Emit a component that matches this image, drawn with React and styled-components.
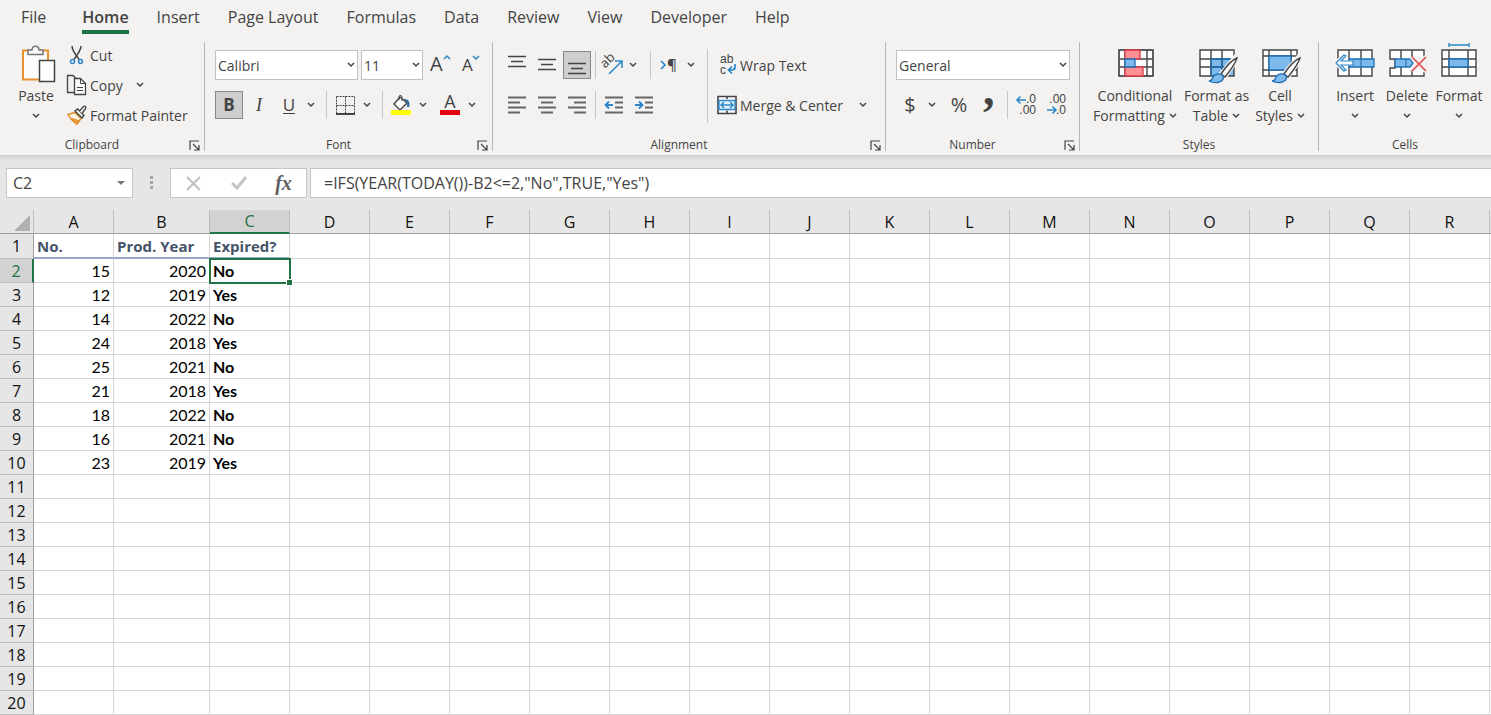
import React from "react";
import styled, { createGlobalStyle, css } from "styled-components";

const UI = `"Open Sans", "Noto Sans", sans-serif`;
const INK = "#444444";
const BLUE = "#2b88c8";
const GREEN = "#217346";

const Global = createGlobalStyle`
  *, *::before, *::after { box-sizing: border-box; }
  html, body { margin: 0; background: #ffffff; }
  body { font-family: ${UI}; font-size: 14px; color: ${INK}; overflow: hidden; }
  button, input, select { font: inherit; color: inherit; }
  svg { display: block; flex: none; overflow: visible; }
`;

const Page = styled.div`
  min-height: 100vh;
  display: flex;
  flex-direction: column;
`;

/* Tabs */
const TabBar = styled.nav`
  display: flex;
  height: 40px;
  padding: 0 7px;
  background: #f3f2f1;
`;

const Tab = styled.button`
  display: flex;
  flex-direction: column;
  height: 34px;
  margin-right: ${(p) => p.$after || 0}px;
  padding: 5px 14px 0;
  border: 0;
  background: none;
  font-size: 16px;
  line-height: 25px;
  white-space: nowrap;
  font-weight: ${(p) => (p.$active ? 600 : 400)};

  &::after {
    content: "";
    width: 100%;
    height: 4px;
    background: ${(p) => (p.$active ? GREEN : "transparent")};
  }
`;

/* Ribbon */
const Ribbon = styled.div`
  display: flex;
  padding: 2px 0 4px;
  background: #f3f2f1;
`;

const Group = styled.section`
  display: flex;
  flex-direction: column;
  flex: 0 0 ${(p) => p.$w}px;
  height: 109px;
  border-right: 1px solid #b8b6b4;
  &:last-child { border-right: 0; }
`;

const GroupBody = styled.div`
  display: flex;
  flex: 1;
  padding-left: ${(p) => p.$pad}px;
  gap: ${(p) => p.$gap || 0}px;
`;

const GroupFooter = styled.div`
  display: flex;
  align-items: center;
  height: 12px;
  font-size: 12px;
  line-height: 12px;
`;

const GroupName = styled.span`
  flex: 1;
  text-align: center;
`;

const Launcher = styled.button`
  display: grid;
  place-items: center;
  width: 20px;
  height: 12px;
  padding: 0;
  border: 0;
  background: none;
`;

const Rows = styled.div`
  display: flex;
  flex-direction: column;
  gap: 10px;
  padding-top: 8px;
`;

const Row = styled.div`
  display: flex;
  align-items: center;
  height: 30px;
  gap: ${(p) => (p.$gap === undefined ? 2 : p.$gap)}px;
`;

const TightRows = styled(Rows)`
  gap: 0;
  padding-top: 0;
  margin-top: -2px;
`;

const IconButton = styled.button`
  display: grid;
  place-items: center;
  width: ${(p) => p.$w || 28}px;
  height: 28px;
  padding: 0;
  border: 1px solid ${(p) => (p.$on ? "#8a8886" : "transparent")};
  background: ${(p) => (p.$on ? "#d0cecc" : "none")};
`;

const Arrow = styled.button`
  display: grid;
  place-items: center;
  width: 16px;
  height: 28px;
  padding: 0;
  border: 0;
  background: none;
`;

const SplitButton = styled.div`
  display: flex;
`;

const TextButton = styled.button`
  display: flex;
  align-items: center;
  gap: 3px;
  height: 28px;
  padding: 0;
  border: 0;
  background: none;
  white-space: nowrap;
`;

const BigButton = styled.button`
  display: flex;
  flex-direction: column;
  align-items: center;
  width: ${(p) => p.$w}px;
  height: 84px;
  padding: 0;
  border: 0;
  background: none;
  line-height: 20px;
  white-space: nowrap;
`;

const BigIcon = styled.span`
  display: grid;
  place-items: center;
  height: 44px;
  flex: none;
`;

const BigLine = styled.span`
  display: flex;
  align-items: center;
  justify-content: center;
  gap: 4px;
  height: 20px;
`;

const Divider = styled.span`
  width: 1px;
  height: 28px;
  margin: 0 2px 0 ${(p) => p.$before || 5}px;
  background: #c8c6c4;
`;

const TallDivider = styled.span`
  width: 1px;
  height: 74px;
  margin: 7px 1px 0 0;
  background: #c8c6c4;
`;

const SelectBox = styled.label`
  position: relative;
  display: flex;
  width: ${(p) => p.$w}px;
  margin-right: 1px;

  select {
    width: 100%;
    height: 30px;
    padding: 0 18px 0 2px;
    border: 1px solid #c3c1bf;
    border-radius: 0;
    background: #ffffff;
    appearance: none;
  }
  svg {
    position: absolute;
    right: 3px;
    top: 12px;
    pointer-events: none;
  }
`;

const Glyph = styled.span`
  font-size: ${(p) => p.$size}px;
  line-height: 24px;
  ${(p) => p.$bold && css`font-weight: 700;`}
  ${(p) => p.$italic && css`font-family: "Liberation Serif", serif; font-style: italic;`}
  ${(p) => p.$under && css`border-bottom: 1px solid ${INK}; line-height: 17px;`}
`;

/* Formula bar */
const FormulaBar = styled.div`
  display: flex;
  align-items: flex-start;
  height: 55px;
  padding: 13px 0 0 6px;
  background: linear-gradient(#cfcecd, #e6e6e6 6px);
`;

const Field = styled.div`
  display: flex;
  align-items: center;
  height: 30px;
  border: 1px solid #c6c6c6;
  background: #ffffff;
  width: ${(p) => p.$w};
  ${(p) => p.$grow && css`flex: 1; border-right: 0;`}

  input {
    flex: 1;
    min-width: 0;
    height: 28px;
    padding: 0 0 0 ${(p) => p.$pad}px;
    border: 0;
    outline: 0;
    background: none;
    font-size: 16px;
  }
`;

const FormulaActions = styled(Field)`
  justify-content: space-around;
  margin-right: 3px;
  color: #606060;
`;

const Grip = styled.span`
  display: grid;
  place-items: center;
  width: 37px;
  height: 30px;
`;

/* Sheet */
const SheetArea = styled.main`
  flex: 1;
  overflow: hidden;
`;

const Sheet = styled.table`
  width: 100%;
  table-layout: fixed;
  border-collapse: separate;
  border-spacing: 0;
  color: #000000;

  th:last-child, td:last-child {
    padding: 0;
    border-right: 0;
  }
`;

const Col = styled.col`
  width: ${(p) => (p.$w ? `${p.$w}px` : "auto")};
`;

const headCell = css`
  padding: 0;
  background: ${(p) => (p.$on ? "#d2d2d2" : "#e6e6e6")};
  color: ${(p) => (p.$on ? GREEN : "#111111")};
  font-size: 16px;
  font-weight: 400;
  line-height: 22px;
  text-align: center;
`;

const ColumnHead = styled.th`
  ${headCell}
  height: 24px;
  border-right: 1px solid #bdbdbd;
  border-bottom: ${(p) => (p.$on ? `2px solid ${GREEN}` : "1px solid #9f9f9f")};
  overflow: hidden;
`;

const Corner = styled(ColumnHead)`
  svg { margin: 2px 3px 0 auto; }
`;

const RowHead = styled.th`
  ${headCell}
  border-right: ${(p) => (p.$on ? `2px solid ${GREEN}` : "1px solid #9f9f9f")};
  border-bottom: 1px solid #bdbdbd;
`;

const Cell = styled.td`
  position: relative;
  height: ${(p) => (p.$title ? 25 : 24)}px;
  padding: 0 3px;
  border-right: 1px solid #d4d4d4;
  border-bottom: ${(p) => (p.$rule ? "2px solid #93a7cd" : "1px solid #d4d4d4")};
  font-family: ${(p) => (p.$title ? UI : `Lato, ${UI}`)};
  font-size: ${(p) => (p.$title ? 15 : 16)}px;
  line-height: 22px;
  font-weight: ${(p) => (p.$title || p.$strong ? 700 : 400)};
  color: ${(p) => (p.$title ? "#44546a" : "#000000")};
  text-align: ${(p) => (p.$number ? "right" : "left")};
  white-space: nowrap;
`;

const Selection = styled.span`
  position: absolute;
  inset: -1px -2px -2px -1px;
  z-index: 1;
  border: 2px solid ${GREEN};

  &::after {
    content: "";
    position: absolute;
    right: -4px;
    bottom: -4px;
    width: 7px;
    height: 7px;
    border: 1px solid #ffffff;
    background: ${GREEN};
  }
`;

/* Icons */
const Icon = ({ w, h, children }) => (
  <svg width={w} height={h} viewBox={`0 0 ${w} ${h}`} fill="none" stroke={INK} aria-hidden="true">
    {children}
  </svg>
);

const IconText = styled.text`
  font-family: ${UI};
  font-size: ${(p) => p.$size}px;
  font-weight: ${(p) => p.$weight || 400};
  fill: ${INK};
  stroke: none;
`;

const SerifIconText = styled(IconText)`
  font-family: "Liberation Serif", serif;
`;

const StackedIconText = styled(IconText)`
  font-family: "Liberation Sans", sans-serif;
`;

const Chevron = () => (
  <Icon w={8} h={6}><path d="M1 1l3 3 3-3" strokeWidth="1.5" /></Icon>
);

const LauncherIcon = () => (
  <Icon w={11} h={11}>
    <path d="M1 10V1h9M4 4l6 6M10 5v5H5" strokeWidth="1.2" />
  </Icon>
);

const PasteIcon = () => (
  <Icon w={40} h={38}>
    <path d="M7 5.500h25v29H7z" fill="#fbfbfb" stroke="#e8912d" strokeWidth="2" />
    <path d="M12 9.500V5h4c0-5 7-5 7 0h4v4.500z" fill="#f8f8f8" stroke="#777" strokeWidth="1.5" />
    <path d="M23.500 15.500h15v21h-15z" fill="#ffffff" strokeWidth="1.5" />
  </Icon>
);

const CutIcon = () => (
  <Icon w={20} h={20}>
    <path d="M5 1c0 4 2 7 7.500 14M14 1c0 4-2 7-7.500 14" strokeWidth="1.5" />
    <circle cx="5.500" cy="16.500" r="2" stroke={BLUE} strokeWidth="1.5" />
    <circle cx="13.500" cy="16.500" r="2" stroke={BLUE} strokeWidth="1.5" />
  </Icon>
);

const CopyIcon = () => (
  <Icon w={20} h={20}>
    <path d="M7.500 17.500H.5V.5h5.500l3 3" strokeWidth="1.3" />
    <path d="M7.500 3.500h6l5 5v11h-11z" fill="#fbfbfb" strokeWidth="1.3" />
    <path d="M13.500 3.500v5h5M10 12.500h6M10 15.500h6" />
  </Icon>
);

const PainterIcon = () => (
  <Icon w={20} h={20}>
    <path d="M1 9.500l7-2 6 6-4 5.500C6 17 3 13 1 9.500z" fill="#fdf3e4" stroke="#e08a24" strokeWidth="1.4" />
    <path d="M4.500 13.500l7 2-1.500 3.500c-2-1-4-3-5.500-5.500z" fill="#f0a03c" stroke="#e08a24" />
    <path d="M8 6l2.500-2 6.500 6.500-2 2.500z" fill="#fbfbfb" strokeWidth="1.4" />
    <path d="M12.500 6l4-4.500c1.500-1 3 .5 2 2L15 8.500" fill="#fbfbfb" strokeWidth="1.4" />
  </Icon>
);

const SizeIcon = ({ up }) => (
  <Icon w={20} h={20}>
    <IconText x={up ? 0 : 2} y="16" $size={up ? 20 : 17}>A</IconText>
    <path d={up ? "M14 4l3-3 3 3" : "M13 1l3 3 3-3"} stroke={BLUE} strokeWidth="1.5" />
  </Icon>
);

const BordersIcon = () => (
  <Icon w={19} h={19}>
    <path d="M.5.5h18M.5 9.500h18M.5.5v17M9.500.5v17M18.500.5v17" strokeDasharray="2 1" />
    <path d="M0 18h19" strokeWidth="2" />
  </Icon>
);

const FillIcon = () => (
  <Icon w={20} h={20}>
    <path d="M9 2l7 6-7 7-6-6z" fill="#fbfbfb" strokeWidth="1.4" />
    <path d="M8 5V1.500C8 0 11 0 11 2v4" />
    <path d="M13 5c4 0 5 2 4 7" stroke="#2b6ca3" strokeWidth="2.200" />
    <path d="M0 17.500h20" stroke="#ffff00" strokeWidth="5" />
  </Icon>
);

const FontColorIcon = () => (
  <Icon w={20} h={20}>
    <IconText x="10" y="13" textAnchor="middle" $size={18}>A</IconText>
    <path d="M0 17.500h20" stroke="#e3000f" strokeWidth="5" />
  </Icon>
);

const LinesIcon = ({ lines, heavy, dy = 0 }) => (
  <Icon w={18} h={18}>
    {lines.map(([x, w], i) => (
      <path
        key={i}
        d={`M${x} ${1.5 + dy + i * 5}h${w}`}
        stroke={heavy ? "#666666" : INK}
        strokeWidth={heavy ? 2 : 1.5}
      />
    ))}
  </Icon>
);

const FULL = [0, 18];

const OrientationIcon = () => (
  <Icon w={22} h={22}>
    <IconText transform="rotate(-45 5 14)" x="3" y="13" $size={13}>ab</IconText>
    <path d="M7 20L19 8M13 7h7v7" stroke={BLUE} strokeWidth="1.5" />
  </Icon>
);

const DirectionIcon = () => (
  <Icon w={18} h={18}>
    <path d="M1 5l4 4-4 4" stroke={BLUE} strokeWidth="1.7" />
    <IconText x="7" y="14" $size={15} $weight={600}>¶</IconText>
  </Icon>
);

const IndentIcon = ({ out }) => (
  <Icon w={18} h={18}>
    <path d="M0 1.500h18M10 6.500h8M10 11.500h8M0 16.500h18" stroke="#666" strokeWidth="2" />
    <path d={out ? "M8 9H1M4 5.500L.5 9 4 12.500" : "M0 9h7M4 5.500L7.500 9 4 12.500"} stroke={BLUE} strokeWidth="1.8" />
  </Icon>
);

const WrapIcon = () => (
  <Icon w={20} h={20}>
    <StackedIconText x="3" y="8" $size={12}>ab</StackedIconText>
    <StackedIconText x="3" y="19" $size={12}>c</StackedIconText>
    <path d="M18 9v3c0 2-1 3-3 3h-3M15 11.500L11.500 15l3.500 3.500" stroke={BLUE} strokeWidth="1.7" />
  </Icon>
);

const MergeIcon = () => (
  <Icon w={20} h={20}>
    <path d="M1 1.500h18v17H1zM10 1v3M10 15.500V19" fill="#fbfbfb" strokeWidth="1.6" />
    <path d="M2 5.500h16v9H2z" fill="#e4f1fb" stroke={BLUE} strokeWidth="1.3" />
    <path d="M4 10h12M7 7l-3 3 3 3M13 7l3 3-3 3" stroke={BLUE} strokeWidth="1.5" />
  </Icon>
);

const CommaIcon = () => (
  <Icon w={12} h={18}>
    <SerifIconText x="0" y="9" $size={46} $weight={700}>,</SerifIconText>
  </Icon>
);

const DecimalIcon = ({ more }) => (
  <Icon w={20} h={20}>
    <StackedIconText x="20" y="8" textAnchor="end" $size={12}>{more ? ".0" : ".00"}</StackedIconText>
    <StackedIconText x="20" y="19" textAnchor="end" $size={12}>{more ? ".00" : ".0"}</StackedIconText>
    <path
      d={more ? "M10 5H1M4.500 1.500L1 5l3.500 3.500" : "M1 15h9M6.500 11.500L10 15l-3.500 3.500"}
      stroke={BLUE}
      strokeWidth="1.6"
    />
  </Icon>
);

const Brush = () => (
  <g>
    <path d="M36 8L20 27l4 4L38 11z" fill="#fbfbfb" stroke="#f3f2f1" strokeWidth="4" />
    <path d="M38 9c-5 2-12 10-16 16l4 3c5-6 10-13 12-19z" fill="#fbfbfb" strokeWidth="1.4" />
    <path d="M10 32c3 0 3-2 4-4 2-4 8-4 10-1 2 5-6 9-14 5z" fill="#7db9ea" stroke="#1e6fb5" strokeWidth="1.3" />
  </g>
);

const ConditionalIcon = () => (
  <Icon w={36} h={30}>
    <g transform="translate(1 0)">
      <path d="M1 1h34v26H1z" fill="#ffffff" />
      <path d="M1 1h34v26H1zM1 10h34M1 18h34M7 1v26M29 1v26" strokeWidth="1.4" />
      <path d="M7 1h15v9H7zM7 18h18v9H7z" fill="#ff8f94" stroke="#d83b44" strokeWidth="1.3" />
      <path d="M7 10h10v8H7z" fill="#7db9ea" stroke="#1e6fb5" strokeWidth="1.3" />
      <path d="M18 11h10v6H18z" fill="#ffffff" stroke="none" />
    </g>
  </Icon>
);

const FormatTableIcon = () => (
  <Icon w={36} h={30}>
    <path d="M1 1h34v26H1z" fill="#ffffff" stroke="none" />
    <path d="M12 10h23v17H12z" fill="#7db9ea" stroke="none" />
    <path d="M1 1h34v26H1zM1 10h34M1 18h34M12 1v26M23 1v26" strokeWidth="1.4" />
    <path d="M12 27V10h23M12 18h23M23 10v17" stroke="#1e6fb5" strokeWidth="1.3" />
    <Brush />
  </Icon>
);

const CellStylesIcon = () => (
  <Icon w={36} h={30}>
    <path d="M1 1h34v26H1z" fill="#ffffff" stroke="none" />
    <path d="M1 1h34v26H1zM1 7h34M7 1v26M1 21h34M29 1v26" strokeWidth="1.4" />
    <path d="M7 7h22v14H7z" fill="#7db9ea" stroke="#1e6fb5" strokeWidth="1.3" />
    <Brush />
  </Icon>
);

const InsertIcon = () => (
  <Icon w={40} h={30}>
    <path d="M3 1h34v26H3zM14 1v26M26 1v26" fill="#ffffff" strokeWidth="1.4" />
    <path d="M14 10h25v8H14z" fill="#7db9ea" stroke="#1e6fb5" strokeWidth="1.3" />
    <path d="M26 10v8" stroke="#1e6fb5" />
    <path d="M17 14H2M10 6l-8.500 8 8.500 8" stroke="#f3f2f1" strokeWidth="5" />
    <path d="M18 12H6l5-5-2-1-8 8 8 8 2-1-5-5h12z" fill="#ffffff" stroke={BLUE} strokeWidth="1.2" />
  </Icon>
);

const DeleteIcon = () => (
  <Icon w={36} h={30}>
    <path d="M1 1h34v26H1v-8h5v-9H1zM12 1v26M23 1v26" fill="#ffffff" strokeWidth="1.4" />
    <path d="M22 8h16v12H22z" fill="#f3f2f1" stroke="none" />
    <path d="M6 10h15l3 4-3 4H6z" fill="#7db9ea" stroke="#1e6fb5" strokeWidth="1.3" />
    <path d="M17 10v8" stroke="#1e6fb5" />
    <path d="M23 8l14 14M37 8L23 22" stroke="#f3f2f1" strokeWidth="5" />
    <path d="M23 8l14 14M37 8L23 22" stroke="#e04f55" strokeWidth="1.7" />
  </Icon>
);

const FormatIcon = () => (
  <Icon w={36} h={42}>
    <path d="M8 2h20M8 0v4M28 0v4" stroke={BLUE} strokeWidth="1.4" />
    <path d="M1 7h34v26H1zM1 16h34M1 24h34M8 7v26M27 7v26" fill="#ffffff" strokeWidth="1.4" />
    <path d="M8 16h19v8H8z" fill="#7db9ea" stroke="#1e6fb5" strokeWidth="1.3" />
  </Icon>
);

/* Composite controls */
const Split = ({ label, w, children }) => (
  <SplitButton>
    <IconButton $w={w} aria-label={label}>{children}</IconButton>
    <Arrow aria-label={`${label} options`}><Chevron /></Arrow>
  </SplitButton>
);

const Dropdown = ({ label, value, w }) => (
  <SelectBox $w={w}>
    <select aria-label={label} defaultValue={value}>
      <option>{value}</option>
    </select>
    <Chevron />
  </SelectBox>
);

const Big = ({ icon, w, first, second }) => (
  <BigButton $w={w}>
    <BigIcon>{icon}</BigIcon>
    <BigLine>{first}</BigLine>
    <BigLine>{second}<Chevron /></BigLine>
  </BigButton>
);

const RibbonGroup = ({ name, w, pad, gap, launcher = true, children }) => (
  <Group $w={w} aria-label={name}>
    <GroupBody $pad={pad} $gap={gap}>{children}</GroupBody>
    <GroupFooter>
      <GroupName>{name}</GroupName>
      {launcher && <Launcher aria-label={`${name} settings`}><LauncherIcon /></Launcher>}
    </GroupFooter>
  </Group>
);

const TABS = ["File", "Home", "Insert", "Page Layout", "Formulas", "Data", "Review", "View", "Developer", "Help"];
const COLUMNS = "ABCDEFGHIJKLMNOPQR".split("");
const TITLES = ["No.", "Prod. Year", "Expired?"];
const DATA = [
  [15, 2020, "No"],
  [12, 2019, "Yes"],
  [14, 2022, "No"],
  [24, 2018, "Yes"],
  [25, 2021, "No"],
  [21, 2018, "Yes"],
  [18, 2022, "No"],
  [16, 2021, "No"],
  [23, 2019, "Yes"],
];
const ROW_COUNT = 20;

export default function App() {
  return (
    <Page>
      <Global />
      <TabBar>
        {TABS.map((t) => (
          <Tab key={t} $active={t === "Home"} $after={t === "File" ? 8 : 0}>{t}</Tab>
        ))}
      </TabBar>

      <Ribbon>
        <RibbonGroup name="Clipboard" w={205} pad={10} gap={5}>
          <Big icon={<PasteIcon />} w={52} first="Paste" />
          <TightRows>
            <Row><TextButton><CutIcon />Cut</TextButton></Row>
            <Row $gap={9}>
              <TextButton><CopyIcon />Copy</TextButton>
              <Arrow aria-label="Copy options"><Chevron /></Arrow>
            </Row>
            <Row><TextButton><PainterIcon />Format Painter</TextButton></Row>
          </TightRows>
        </RibbonGroup>

        <RibbonGroup name="Font" w={288} pad={10}>
          <Rows>
            <Row>
              <Dropdown label="Font" value="Calibri" w={143} />
              <Dropdown label="Font size" value="11" w={62} />
              <IconButton aria-label="Increase font size"><SizeIcon up /></IconButton>
              <IconButton aria-label="Decrease font size"><SizeIcon /></IconButton>
            </Row>
            <Row>
              <IconButton $on aria-label="Bold"><Glyph $size={17} $bold>B</Glyph></IconButton>
              <IconButton aria-label="Italic"><Glyph $size={18} $italic>I</Glyph></IconButton>
              <Split label="Underline"><Glyph $size={17} $under>U</Glyph></Split>
              <Divider />
              <Split label="Borders"><BordersIcon /></Split>
              <Divider />
              <Row $gap={5}>
                <Split label="Fill color"><FillIcon /></Split>
                <Split label="Font color"><FontColorIcon /></Split>
              </Row>
            </Row>
          </Rows>
        </RibbonGroup>

        <RibbonGroup name="Alignment" w={393} pad={10} gap={8}>
          <Rows>
            <Row>
              <IconButton aria-label="Top align"><LinesIcon lines={[FULL, [3, 12], FULL]} dy={-1} /></IconButton>
              <IconButton aria-label="Middle align"><LinesIcon lines={[FULL, [3, 12], FULL]} dy={2} /></IconButton>
              <IconButton $on aria-label="Bottom align"><LinesIcon lines={[FULL, [3, 12], FULL]} dy={6} /></IconButton>
              <Divider $before={2} />
              <Split label="Orientation" w={25}><OrientationIcon /></Split>
              <Divider $before={7} />
              <Split label="Text direction"><DirectionIcon /></Split>
            </Row>
            <Row>
              <IconButton aria-label="Align left"><LinesIcon heavy lines={[FULL, [0, 12], FULL, [0, 12]]} /></IconButton>
              <IconButton aria-label="Center"><LinesIcon heavy lines={[FULL, [3, 12], FULL, [3, 12]]} /></IconButton>
              <IconButton aria-label="Align right"><LinesIcon heavy lines={[FULL, [6, 12], FULL, [6, 12]]} /></IconButton>
              <Divider $before={2} />
              <IconButton aria-label="Decrease indent"><IndentIcon out /></IconButton>
              <IconButton aria-label="Increase indent"><IndentIcon /></IconButton>
            </Row>
          </Rows>
          <TallDivider />
          <Rows>
            <Row><TextButton><WrapIcon />Wrap Text</TextButton></Row>
            <Row $gap={12}>
              <TextButton><MergeIcon />Merge &amp; Center</TextButton>
              <Arrow aria-label="Merge options"><Chevron /></Arrow>
            </Row>
          </Rows>
        </RibbonGroup>

        <RibbonGroup name="Number" w={194} pad={10}>
          <Rows>
            <Row><Dropdown label="Number format" value="General" w={174} /></Row>
            <Row>
              <Row $gap={5}>
                <Split label="Currency"><Glyph $size={20}>$</Glyph></Split>
                <IconButton aria-label="Percent"><Glyph $size={20}>%</Glyph></IconButton>
              </Row>
              <IconButton aria-label="Comma style"><CommaIcon /></IconButton>
              <Divider $before={2} />
              <IconButton aria-label="Increase decimal"><DecimalIcon more /></IconButton>
              <IconButton aria-label="Decrease decimal"><DecimalIcon /></IconButton>
            </Row>
          </Rows>
        </RibbonGroup>

        <RibbonGroup name="Styles" w={239} pad={10} gap={2} launcher={false}>
          <Big icon={<ConditionalIcon />} w={90} first="Conditional" second="Formatting" />
          <Big icon={<FormatTableIcon />} w={69} first="Format as" second="Table" />
          <Big icon={<CellStylesIcon />} w={54} first="Cell" second="Styles" />
        </RibbonGroup>

        <RibbonGroup name="Cells" w={172} pad={11} gap={2} launcher={false}>
          <Big icon={<InsertIcon />} w={50} first="Insert" />
          <Big icon={<DeleteIcon />} w={50} first="Delete" />
          <Big icon={<FormatIcon />} w={50} first="Format" />
        </RibbonGroup>
      </Ribbon>

      <FormulaBar>
        <Field $w="127px" $pad={6}>
          <input aria-label="Name box" defaultValue="C2" />
          <Icon w={17} h={6}><path d="M2 1h8L6 5z" fill="#777" stroke="none" /></Icon>
        </Field>
        <Grip>
          <Icon w={3} h={14}>
            <path d="M1.500 0v14" stroke="#a6a6a6" strokeWidth="3" strokeDasharray="3 2" />
          </Icon>
        </Grip>
        <FormulaActions $w="137px">
          <IconButton aria-label="Cancel">
            <Icon w={15} h={15}><path d="M1 1l13 13M14 1L1 14" stroke="#c0c0c0" strokeWidth="2" /></Icon>
          </IconButton>
          <IconButton aria-label="Enter">
            <Icon w={16} h={14}><path d="M1 7l5 5L15 1" stroke="#c4c4c4" strokeWidth="3" /></Icon>
          </IconButton>
          <IconButton aria-label="Insert function"><Glyph $size={20} $italic $bold>fx</Glyph></IconButton>
        </FormulaActions>
        <Field $grow $pad={13}>
          <input aria-label="Formula" defaultValue={'=IFS(YEAR(TODAY())-B2<=2,"No",TRUE,"Yes")'} />
        </Field>
      </FormulaBar>

      <SheetArea>
        <Sheet>
          <colgroup>
            <Col $w={34} />
            {COLUMNS.map((c) => <Col key={c} $w={c === "B" ? 96 : 80} />)}
            <Col />
          </colgroup>
          <thead>
            <tr>
              <Corner aria-label="Select all">
                <Icon w={16} h={16}><path d="M16 0v16H0z" fill="#b1b1b1" stroke="none" /></Icon>
              </Corner>
              {COLUMNS.map((c) => <ColumnHead key={c} scope="col" $on={c === "C"}>{c}</ColumnHead>)}
              <ColumnHead />
            </tr>
          </thead>
          <tbody>
            {Array.from({ length: ROW_COUNT }, (_, r) => (
              <tr key={r}>
                <RowHead scope="row" $on={r === 1}>{r + 1}</RowHead>
                {COLUMNS.map((c, i) => (
                  <Cell
                    key={c}
                    $title={r === 0}
                    $rule={r === 0 && i < 3}
                    $number={r > 0 && i < 2}
                    $strong={i === 2}
                  >
                    {r === 0 ? TITLES[i] : DATA[r - 1]?.[i]}
                    {r === 1 && c === "C" && <Selection />}
                  </Cell>
                ))}
                <Cell />
              </tr>
            ))}
          </tbody>
        </Sheet>
      </SheetArea>
    </Page>
  );
}
